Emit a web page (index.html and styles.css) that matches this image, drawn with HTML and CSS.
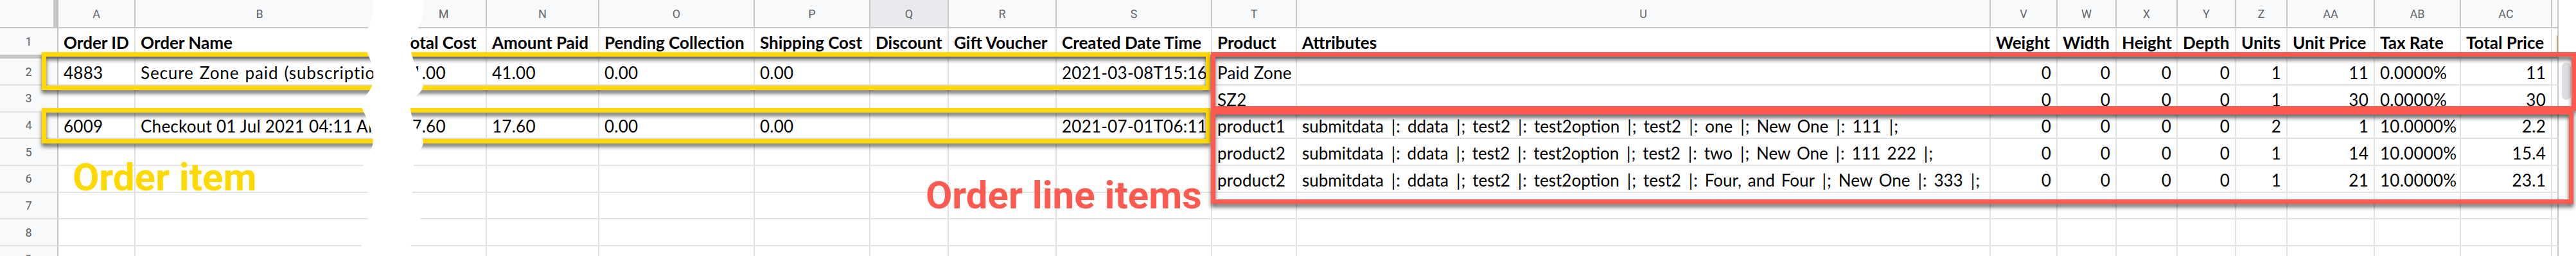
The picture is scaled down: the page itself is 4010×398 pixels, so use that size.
FILE: index.html
```html
<!DOCTYPE html>
<html>
<head>
<meta charset="utf-8">
<link rel="stylesheet" href="styles.css">
</head>
<body>
<div class="wrap">
  <div class="sheet">
    <div class="corner"></div>
    <div class="ch">A</div><div class="ch bcol">B</div><div class="ch mcol">M</div><div class="ch">N</div><div class="ch">O</div><div class="ch">P</div><div class="ch sel">Q</div><div class="ch">R</div><div class="ch">S</div><div class="ch">T</div><div class="ch">U</div><div class="ch">V</div><div class="ch">W</div><div class="ch">X</div><div class="ch">Y</div><div class="ch">Z</div><div class="ch">AA</div><div class="ch">AB</div><div class="ch">AC</div><div class="ch ad"></div><div class="x"></div>

    <div class="rh h">1</div>
    <div class="c h">Order ID</div><div class="c h">Order Name</div><div class="c h">Total Cost</div><div class="c h">Amount Paid</div><div class="c h">Pending Collection</div><div class="c h">Shipping Cost</div><div class="c h">Discount</div><div class="c h">Gift Voucher</div><div class="c h">Created Date Time</div><div class="c h">Product</div><div class="c h">Attributes</div><div class="c h">Weight</div><div class="c h">Width</div><div class="c h">Height</div><div class="c h">Depth</div><div class="c h">Units</div><div class="c h">Unit Price</div><div class="c h">Tax Rate</div><div class="c h">Total Price</div><div class="c h ad">|</div><div class="x"></div>

    <div class="rh">2</div>
    <div class="c">4883</div><div class="c wide">Secure Zone paid (subscription)</div><div class="c">41.00</div><div class="c">41.00</div><div class="c">0.00</div><div class="c">0.00</div><div class="c"></div><div class="c"></div><div class="c">2021-03-08T15:16</div><div class="c">Paid Zone</div><div class="c"></div><div class="c r">0</div><div class="c r">0</div><div class="c r">0</div><div class="c r">0</div><div class="c r">1</div><div class="c r">11</div><div class="c">0.0000%</div><div class="c r">11</div><div class="c ad"></div><div class="x"></div>

    <div class="rh">3</div>
    <div class="c"></div><div class="c"></div><div class="c"></div><div class="c"></div><div class="c"></div><div class="c"></div><div class="c"></div><div class="c"></div><div class="c"></div><div class="c">SZ2</div><div class="c"></div><div class="c r">0</div><div class="c r">0</div><div class="c r">0</div><div class="c r">0</div><div class="c r">1</div><div class="c r">30</div><div class="c">0.0000%</div><div class="c r">30</div><div class="c ad"></div><div class="x"></div>

    <div class="rh">4</div>
    <div class="c">6009</div><div class="c">Checkout 01 Jul 2021 04:11 AM</div><div class="c">17.60</div><div class="c">17.60</div><div class="c">0.00</div><div class="c">0.00</div><div class="c"></div><div class="c"></div><div class="c">2021-07-01T06:11</div><div class="c">product1</div><div class="c u"><span class="fit f4">submitdata <span class="sep">|:</span> ddata <span class="sep">|;</span> test2 <span class="sep">|:</span> test2option <span class="sep">|;</span> test2 <span class="sep">|:</span> one <span class="sep">|;</span> New One <span class="sep">|:</span> 111 <span class="sep">|;</span></span></div><div class="c r">0</div><div class="c r">0</div><div class="c r">0</div><div class="c r">0</div><div class="c r">2</div><div class="c r">1</div><div class="c">10.0000%</div><div class="c r">2.2</div><div class="c ad"></div><div class="x"></div>

    <div class="rh">5</div>
    <div class="c"></div><div class="c"></div><div class="c"></div><div class="c"></div><div class="c"></div><div class="c"></div><div class="c"></div><div class="c"></div><div class="c"></div><div class="c">product2</div><div class="c u"><span class="fit f5">submitdata <span class="sep">|:</span> ddata <span class="sep">|;</span> test2 <span class="sep">|:</span> test2option <span class="sep">|;</span> test2 <span class="sep">|:</span> two <span class="sep">|;</span> New One <span class="sep">|:</span> 111 222 <span class="sep">|;</span></span></div><div class="c r">0</div><div class="c r">0</div><div class="c r">0</div><div class="c r">0</div><div class="c r">1</div><div class="c r">14</div><div class="c">10.0000%</div><div class="c r">15.4</div><div class="c ad"></div><div class="x"></div>

    <div class="rh">6</div>
    <div class="c"></div><div class="c"></div><div class="c"></div><div class="c"></div><div class="c"></div><div class="c"></div><div class="c"></div><div class="c"></div><div class="c"></div><div class="c">product2</div><div class="c u"><span class="fit f6">submitdata <span class="sep">|:</span> ddata <span class="sep">|;</span> test2 <span class="sep">|:</span> test2option <span class="sep">|;</span> test2 <span class="sep">|:</span> Four, and Four <span class="sep">|;</span> New One <span class="sep">|:</span> 333 <span class="sep">|;</span></span></div><div class="c r">0</div><div class="c r">0</div><div class="c r">0</div><div class="c r">0</div><div class="c r">1</div><div class="c r">21</div><div class="c">10.0000%</div><div class="c r">23.1</div><div class="c ad"></div><div class="x"></div>

    <div class="rh">7</div>
    <div class="c"></div><div class="c"></div><div class="c"></div><div class="c"></div><div class="c"></div><div class="c"></div><div class="c"></div><div class="c"></div><div class="c"></div><div class="c"></div><div class="c"></div><div class="c"></div><div class="c"></div><div class="c"></div><div class="c"></div><div class="c"></div><div class="c"></div><div class="c"></div><div class="c"></div><div class="c ad"></div><div class="x"></div>

    <div class="rh">8</div>
    <div class="c"></div><div class="c"></div><div class="c"></div><div class="c"></div><div class="c"></div><div class="c"></div><div class="c"></div><div class="c"></div><div class="c"></div><div class="c"></div><div class="c"></div><div class="c"></div><div class="c"></div><div class="c"></div><div class="c"></div><div class="c"></div><div class="c"></div><div class="c"></div><div class="c"></div><div class="c ad"></div><div class="x"></div>

    <div class="rh">9</div>
    <div class="c"></div><div class="c"></div><div class="c"></div><div class="c"></div><div class="c"></div><div class="c"></div><div class="c"></div><div class="c"></div><div class="c"></div><div class="c"></div><div class="c"></div><div class="c"></div><div class="c"></div><div class="c"></div><div class="c"></div><div class="c"></div><div class="c"></div><div class="c"></div><div class="c"></div><div class="c ad"></div><div class="x"></div>
  </div>

  <div class="thumb"></div>

  <div class="box yellow yb1"></div>
  <div class="box yellow yb2"></div>
  <div class="box red rb1"></div>
  <div class="box red rb2"></div>

  <div class="note n1">Order item</div>
  <div class="note n2">Order line items</div>

  <svg class="tear" width="140" height="398" viewBox="0 0 140 398" xmlns="http://www.w3.org/2000/svg">
    <path fill="#ffffff" d="M40,0 Q42,20 38.5,30 Q35,40 30.5,47.5 Q26,55 27,65 Q28,75 33,85 Q38,95 40,105 Q42,115 41,125 Q40,135 34,142.5 Q28,150 24.5,157.5 Q21,165 26.5,175 Q32,185 37,200 Q42,215 40,225 Q38,235 31.5,245 Q25,255 24,265 Q23,275 27.5,285 Q32,295 34.5,307.5 Q37,320 34.5,332.5 Q32,345 27,357.5 Q22,370 22,398 L98,398 Q98,383 103,372.5 Q108,362 112.5,351.5 Q117,341 112.5,330.5 Q108,320 104,309.5 Q100,299 101.5,278 Q103,257 106.5,247.5 Q110,238 116,230 Q122,222 115,211 Q108,200 103,186 Q98,172 99,163.5 Q100,155 111,146 Q122,137 117,126 Q112,115 106,100 Q100,85 99,72.5 Q98,60 105,51.5 Q112,43 116,34 Q120,25 120,0 Z"/>
  </svg>
</div>
</body>
</html>
```

FILE: styles.css
```css
* {
  box-sizing: border-box;
  margin: 0;
  padding: 0;
}

html, body {
  width: 4010px;
  height: 398px;
  overflow: hidden;
  background: #ffffff;
}

body {
  font-family: Lato, "Liberation Sans", sans-serif;
}

.wrap {
  position: relative;
  width: 4010px;
  height: 398px;
  overflow: hidden;
}

.sheet {
  display: grid;
  grid-template-columns: 91px 120px 407px 140px 175px 242px 180px 122px 168px 242px 132px 1080px 104px 92px 95px 91px 80px 136px 134px 142px 10px 27px;
  grid-template-rows: 44px 47.3px repeat(8, 41.67px);
}

.corner {
  background: #f8f9fa;
  border-right: 8px solid #c4c7c5;
  border-bottom: 2px solid #c4c7c5;
}

.ch {
  background: #f8f9fa;
  border-right: 2px solid #c4c7c5;
  border-bottom: 2px solid #c4c7c5;
  font-family: Roboto, "Liberation Sans", sans-serif;
  font-size: 18px;
  color: #5f6368;
  display: flex;
  align-items: center;
  justify-content: center;
}

.ch.sel {
  background: #e8eaed;
}

.ch.bcol {
  padding-right: 19px;
}

.ch.mcol {
  padding-left: 7px;
}

.rh {
  background: #f8f9fa;
  border-right: 2px solid #c4c7c5;
  border-bottom: 2px solid #e0e2e4;
  font-family: Roboto, "Liberation Sans", sans-serif;
  font-size: 18px;
  color: #5f6368;
  display: flex;
  align-items: center;
  justify-content: center;
}

.rh.h {
  border-bottom: 6px solid #c4c7c5;
}

.c {
  border-right: 2px solid #e2e3e3;
  border-bottom: 2px solid #e2e3e3;
  font-size: 26px;
  line-height: 26px;
  letter-spacing: 0.25px;
  color: #000000;
  padding: 0 8px 5px;
  display: flex;
  align-items: flex-end;
  white-space: nowrap;
  overflow: hidden;
}

.c.r {
  justify-content: flex-end;
}

.c.wide {
  letter-spacing: 0.9px;
  word-spacing: 1.5px;
}

.c.h {
  font-weight: 700;
  letter-spacing: 0;
  border-bottom: 6px solid #c4c7c5;
  padding-bottom: 6px;
}

.c.u {
  letter-spacing: 0;
}

.fit {
  display: inline-block;
  white-space: normal;
  text-align: justify;
  text-align-last: justify;
}

.f4 {
  width: 929px;
}

.f5 {
  width: 983px;
}

.f6 {
  width: 1056px;
}

.sep {
  padding-left: 2px;
  letter-spacing: 1px;
}

.c.ad, .ch.ad {
  border-right: 2px solid #c4c7c5;
  padding: 0 0 6px 5px;
}

.c.h.ad {
  font-weight: 400;
}

.x {
  background: #ffffff;
}

.thumb {
  position: absolute;
  left: 3988px;
  top: 97px;
  width: 14px;
  height: 58px;
  border-radius: 7px;
  background: #dadce0;
}

.box {
  position: absolute;
  border: 7px solid;
  filter: drop-shadow(0 5px 3px rgba(0, 0, 0, 0.6));
}

.yellow {
  border-color: #ffd900;
}

.red {
  border-color: #ff5a4f;
}

.yb1 {
  left: 65px;
  top: 81px;
  width: 1819px;
  height: 59px;
}

.yb2 {
  left: 65px;
  top: 168px;
  width: 1819px;
  height: 55px;
}

.rb1 {
  left: 1885px;
  top: 81px;
  width: 2125px;
  height: 91px;
}

.rb2 {
  left: 1885px;
  top: 171px;
  width: 2121px;
  height: 146px;
}

.note {
  position: absolute;
  font-family: Roboto, "Liberation Sans", sans-serif;
  font-weight: 700;
  font-size: 60px;
  line-height: 60px;
  white-space: nowrap;
}

.n1 {
  left: 113px;
  top: 246px;
  color: #ffd900;
}

.n2 {
  left: 1441px;
  top: 274px;
  color: #ff5a4f;
}

.tear {
  position: absolute;
  left: 540px;
  top: 0;
  z-index: 5;
}
```
